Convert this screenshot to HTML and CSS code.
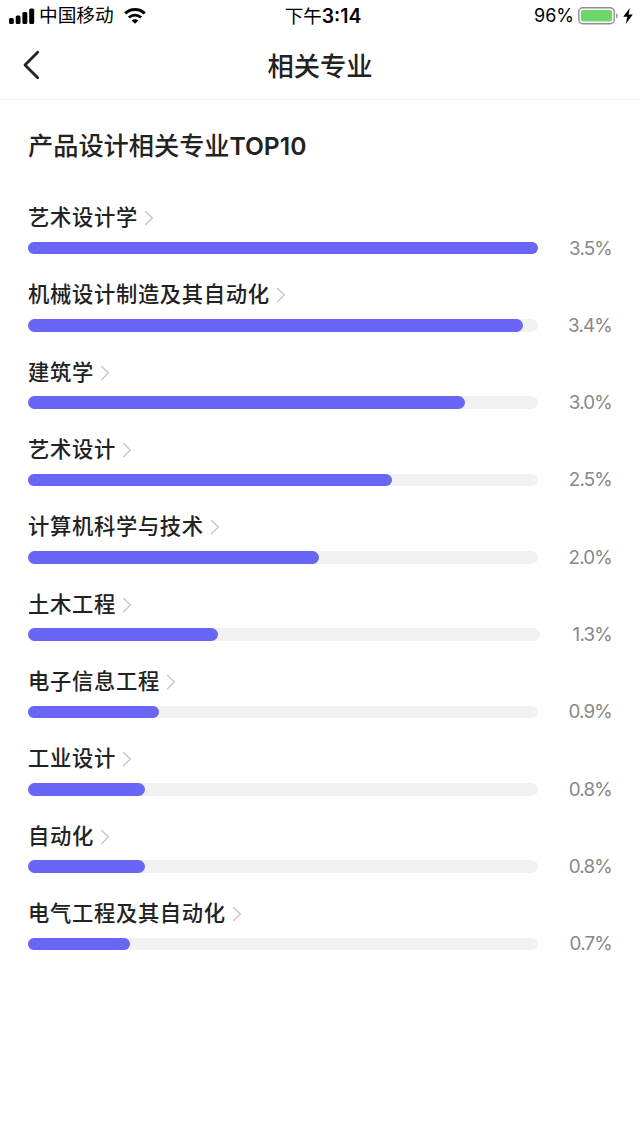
FILE: index.html
```html
<!DOCTYPE html>
<html lang="zh-CN">
<head>
<meta charset="UTF-8">
<meta name="viewport" content="width=device-width, initial-scale=1.0">
<title>相关专业</title>
<link rel="stylesheet" href="styles.css">
</head>
<body>
<div class="status-bar">
  <div class="status-left">
    <svg class="signal" width="26" height="16" viewBox="0 0 26 16">
      <rect x="0" y="10" width="4.8" height="6" rx="1.5"/>
      <rect x="6.7" y="7.5" width="4.8" height="8.5" rx="1.5"/>
      <rect x="13.4" y="4" width="4.9" height="12" rx="1.5"/>
      <rect x="20.2" y=".4" width="5" height="15.6" rx="1.5"/>
    </svg>
    <span class="carrier">中国移动</span>
    <svg class="wifi" width="22" height="16" viewBox="0 0 22 16">
      <path d="M1.2 5.4C6.8.2 15.2.2 20.8 5.4" fill="none" stroke="#000" stroke-width="3"/>
      <path d="M4.9 9.5C8.4 6.2 13.6 6.2 17.1 9.5" fill="none" stroke="#000" stroke-width="2.8"/>
      <path d="M11 15.8L7.6 12.5C9.5 10.8 12.5 10.8 14.4 12.5Z"/>
    </svg>
  </div>
  <div class="status-time">下午<b>3:14</b></div>
  <div class="status-right">
    <span class="battery-text">96%</span>
    <svg class="battery" width="41" height="18" viewBox="0 0 41 18">
      <rect x=".8" y=".8" width="35.4" height="15.9" rx="4" fill="#fff" stroke="#8e8e8e" stroke-width="1.4"/>
      <rect x="3" y="3" width="31" height="11.5" rx="2" fill="#6cd66a"/>
      <path d="M38.2 6.2c2.2.8 2.2 4.3 0 5.1z" fill="#8e8e8e"/>
    </svg>
    <svg class="bolt" width="10" height="16" viewBox="0 0 10 16">
      <path d="M6.8 0L.2 8.8H4.3L2.8 16L9.8 6.5H5.6Z"/>
    </svg>
  </div>
</div>

<header class="nav">
  <svg class="back" width="18" height="30" viewBox="0 0 18 30">
    <path d="M15.7 2.2L3 15L15.7 27.8" fill="none" stroke="#222" stroke-width="2.8" stroke-linecap="round" stroke-linejoin="round"/>
  </svg>
  <h1>相关专业</h1>
</header>

<main class="content">
  <h2>产品设计相关专业<span class="latin">TOP10</span></h2>
  <ul class="list" id="list"></ul>
</main>

<script>
const majors = [
  ['艺术设计学', 3.5],
  ['机械设计制造及其自动化', 3.4],
  ['建筑学', 3.0],
  ['艺术设计', 2.5],
  ['计算机科学与技术', 2.0],
  ['土木工程', 1.3],
  ['电子信息工程', 0.9],
  ['工业设计', 0.8],
  ['自动化', 0.8],
  ['电气工程及其自动化', 0.7]
];

const max = majors[0][1];

document.getElementById('list').innerHTML = majors.map(([name, value]) => `
  <li class="item">
    <div class="name">
      <span>${name}</span>
      <svg class="arrow" width="10" height="16" viewBox="0 0 10 16">
        <path d="M1.2 1L8.2 8L1.2 15" fill="none" stroke="#c8c8c8" stroke-width="1.4"/>
      </svg>
    </div>
    <div class="row">
      <div class="track"><div class="fill" style="width: ${value / max * 100}%"></div></div>
      <div class="value${value === 1.3 ? ' narrow' : ''}">${value.toFixed(1)}%</div>
    </div>
  </li>`).join('');
</script>
</body>
</html>
```

FILE: styles.css
```css
* {
  box-sizing: border-box;
}

body {
  margin: 0;
  background-color: #fff;
  color: #222;
  font-family: Inter, "Noto Sans CJK SC", sans-serif;
}

h1, h2, ul {
  margin: 0;
  padding: 0;
}

svg {
  display: block;
  flex: none;
}

.status-bar {
  display: grid;
  grid-template-columns: 1fr auto 1fr;
  grid-template-rows: 31px;
  align-items: center;
  height: 32px;
  padding: 0 7px 0 9px;
  color: #000;
  font-size: 18px;
  line-height: 28px;
}

.status-left,
.status-right {
  display: flex;
  align-items: center;
}

.carrier,
.battery-text,
.status-time {
  padding-top: 1px;
}

.status-right {
  justify-content: flex-end;
}

.carrier {
  margin-left: 4px;
  font-size: 18.7px;
}

.wifi {
  margin-left: 10px;
}

.status-time {
  padding-left: 4px;
  font-size: 18.5px;
}

.status-time b {
  font-size: 19.4px;
  font-weight: 600;
}

.battery-text {
  margin-right: 4px;
}

.bolt {
  margin-left: 4px;
}

.nav {
  display: grid;
  grid-template-columns: 40px 1fr 40px;
  align-items: center;
  height: 68px;
  padding: 0 22px;
  border-bottom: 1px solid #f1f1f1;
}

.back {
  margin-bottom: 2px;
}

.nav h1 {
  padding-top: 2px;
  font-size: 26.3px;
  font-weight: 500;
  line-height: 36px;
  text-align: center;
}

.content {
  padding: 28px 28px 0;
}

.content h2 {
  margin-bottom: 38px;
  font-size: 25.2px;
  font-weight: 500;
  line-height: 36px;
}

.latin {
  font-size: 24.6px;
  font-weight: 600;
}

.list {
  list-style: none;
}

.item {
  height: 77.33px;
}

.name {
  display: flex;
  align-items: center;
  height: 30px;
  font-size: 21.3px;
  font-weight: 500;
  line-height: 30px;
  letter-spacing: 0.68px;
}

.arrow {
  margin: 2px 0 0 6.5px;
}

.row {
  display: flex;
  align-items: center;
  height: 24px;
  margin-top: 4px;
}

.track {
  flex: 1;
  height: 12.5px;
  border-radius: 7px;
  background-color: #f1f1f1;
}

.fill {
  height: 100%;
  border-radius: 7px;
  background-color: #6966f6;
}

.value {
  width: 74px;
  padding-top: 1px;
  color: #888;
  font-size: 18.8px;
  line-height: 24px;
  letter-spacing: -0.8px;
  text-align: right;
}

.value.narrow {
  width: 72px;
}
```
